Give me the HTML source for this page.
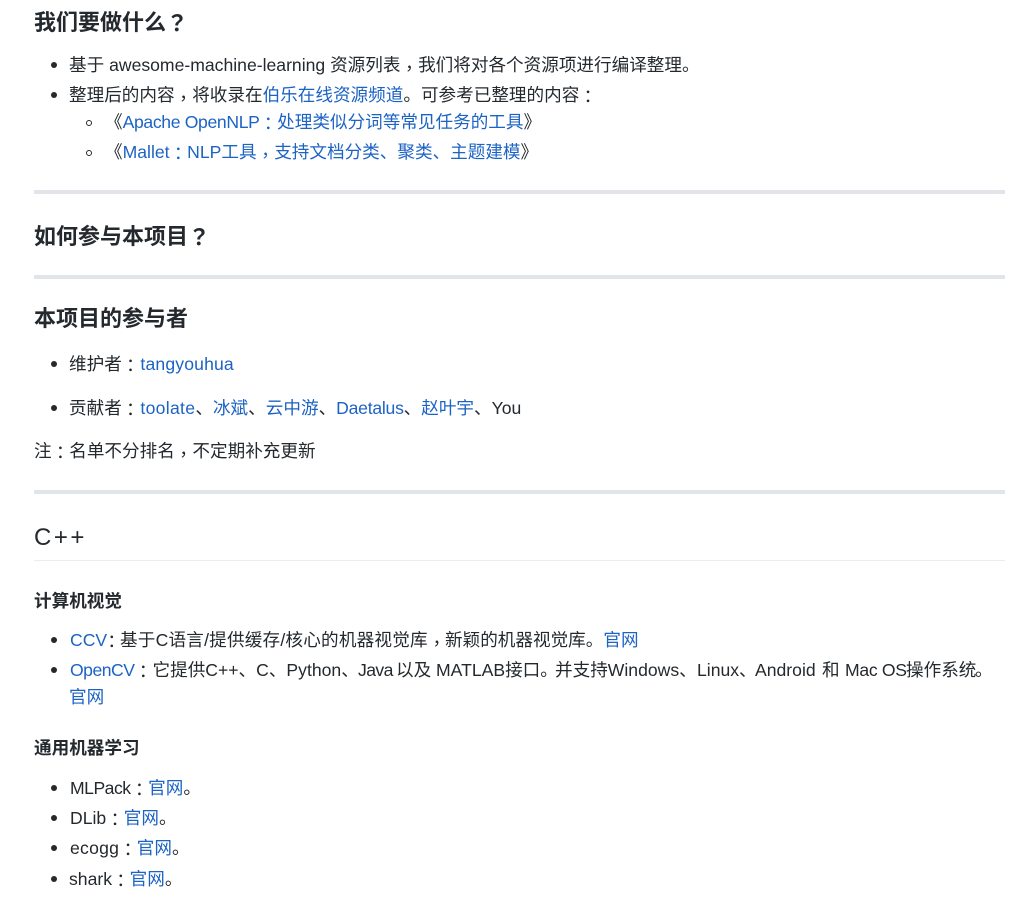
<!DOCTYPE html>
<html lang="zh-CN">
<head>
<meta charset="utf-8">
<title>awesome-machine-learning</title>
<style>
html,body{margin:0;padding:0;background:#fff;}
body{width:1035px;height:897px;position:relative;overflow:hidden;color:#24292e;font-family:"Liberation Sans","Noto Sans CJK SC",sans-serif;font-size:17.6px;}
.l{position:absolute;white-space:nowrap;line-height:30px;height:30px;}
a{color:#1c63c4;text-decoration:none;}
i{font-style:normal;font-family:"Noto Sans CJK TC",sans-serif;position:relative;top:2px;font-weight:400;}
i.k{top:4px;}
.h2{font-size:22px;font-weight:700;left:34px;}
.h2 i{font-weight:700;top:1px;}
.h4{font-size:17.6px;font-weight:700;left:34px;}
.hr{position:absolute;left:34px;width:971px;height:4px;background:#e1e4e8;}
.d{position:absolute;left:51px;width:6px;height:6px;border-radius:50%;background:#24292e;}
.c{position:absolute;left:86px;width:4px;height:4px;border-radius:50%;border:1px solid #24292e;}
.t{left:69px;}
.s{left:105px;}
</style>
</head>
<body>
<div class="l h2" style="top:6px">我们要做什么<i lang="zh-TW">？</i></div>
<div class="d" style="top:62px"></div>
<div class="l t" style="top:50px">基于 awesome-machine-learning 资源列表<i lang="zh-TW" class="k">，</i>我们将对各个资源项进行编译整理。</div>
<div class="d" style="top:92px"></div>
<div class="l t" style="top:80px">整理后的内容<i lang="zh-TW" class="k">，</i>将收录在<a href="#">伯乐在线资源频道</a>。可参考已整理的内容<i lang="zh-TW">：</i></div>
<div class="c" style="top:120px"></div>
<div class="l s" style="top:107px">《<a href="#"><span style="letter-spacing:-.35px">Apache OpenNLP</span><i lang="zh-TW">：</i>处理类似分词等常见任务的工具</a>》</div>
<div class="c" style="top:150px"></div>
<div class="l s" style="top:137px">《<a href="#">Mallet<i lang="zh-TW">：</i>NLP工具<i lang="zh-TW" class="k">，</i>支持文档分类、聚类、主题建模</a>》</div>
<div class="hr" style="top:190px"></div>
<div class="l h2" style="top:220px">如何参与本项目<i lang="zh-TW">？</i></div>
<div class="hr" style="top:275px"></div>
<div class="l h2" style="top:304px">本项目的参与者</div>
<div class="d" style="top:361px"></div>
<div class="l t" style="top:349px">维护者<i lang="zh-TW">：</i><a href="#" style="letter-spacing:.15px;margin-left:1px">tangyouhua</a></div>
<div class="d" style="top:405px"></div>
<div class="l t" style="top:393px">贡献者<i lang="zh-TW">：</i><a href="#" style="letter-spacing:.3px;margin-left:1px">toolate</a>、<a href="#">冰斌</a>、<a href="#">云中游</a>、<a href="#" style="letter-spacing:-.25px">Daetalus</a>、<a href="#">赵叶宇</a>、You</div>
<div class="l" style="top:436px;left:34px">注<i lang="zh-TW">：</i>名单不分排名<i lang="zh-TW" class="k">，</i>不定期补充更新</div>
<div class="hr" style="top:490px"></div>
<div class="l" style="top:523px;left:34px;font-size:24px;letter-spacing:2.5px">C++</div>
<div style="position:absolute;left:34px;width:971px;height:1px;top:560px;background:#eaecef"></div>
<div class="l h4" style="top:586px">计算机视觉</div>
<div class="d" style="top:637px"></div>
<div class="l" style="top:625px;left:70px"><a href="#">CCV</a></div>
<div class="l" style="top:625px;left:103px"><i lang="zh-TW">：</i></div>
<div class="l" style="top:625px;left:120px;letter-spacing:.2px">基于C语言/提供缓存/核心的机器视觉库</div>
<div class="l" style="top:625px;left:428px"><i lang="zh-TW" class="k">，</i></div>
<div class="l" style="top:625px;left:445px">新颖的机器视觉库。<a href="#">官网</a></div>
<div class="d" style="top:667px"></div>
<div class="l" style="top:655px;left:70px;letter-spacing:-.5px"><a href="#">OpenCV</a></div>
<div class="l" style="top:655px;left:134.5px"><i lang="zh-TW">：</i></div>
<div class="l" style="top:655px;left:152.5px">它提供C++、C、Python、</div>
<div class="l" style="top:655px;left:358px;letter-spacing:-.6px">Java</div>
<div class="l" style="top:655px;left:396px">以及</div>
<div class="l" style="top:655px;left:436px">MATLAB接口。</div>
<div class="l" style="top:655px;left:555px">并支持Windows、</div>
<div class="l" style="top:655px;left:697px">Linux、</div>
<div class="l" style="top:655px;left:755px">Android</div>
<div class="l" style="top:655px;left:822px">和</div>
<div class="l" style="top:655px;left:845px;letter-spacing:-.3px">Mac OS</div>
<div class="l" style="top:655px;left:906px">操作系统</div>
<div class="l" style="top:655px;left:975px">。</div>
<div class="l t" style="top:682px"><a href="#">官网</a></div>
<div class="l h4" style="top:733px">通用机器学习</div>
<div class="d" style="top:785px"></div>
<div class="l" style="top:773px;left:70px"><span style="letter-spacing:-.5px">MLPack</span><i lang="zh-TW">：</i><a href="#">官网</a>。</div>
<div class="d" style="top:815px"></div>
<div class="l" style="top:803px;left:70px">DLib<i lang="zh-TW">：</i><a href="#">官网</a>。</div>
<div class="d" style="top:845px"></div>
<div class="l" style="top:833px;left:70px"><span style="letter-spacing:.25px">ecogg</span><i lang="zh-TW">：</i><a href="#">官网</a>。</div>
<div class="d" style="top:876px"></div>
<div class="l t" style="top:864px">shark<i lang="zh-TW">：</i><a href="#">官网</a>。</div>
</body>
</html>
